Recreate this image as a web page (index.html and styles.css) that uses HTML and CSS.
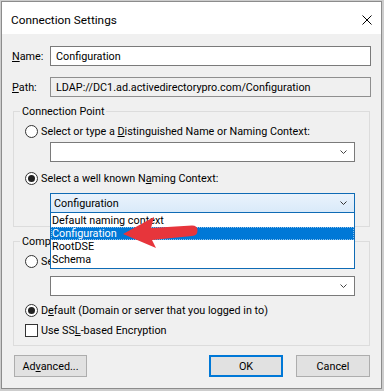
FILE: index.html
```html
<!DOCTYPE html>
<html lang="en">
<head>
  <meta charset="UTF-8">
  <title>Connection Settings</title>
  <link rel="stylesheet" href="styles.css">
</head>
<body>
  <div class="window">
    <div class="titlebar">
      <span class="title">Connection Settings</span>
      <svg class="close" width="10" height="10" viewBox="0 0 10 10">
        <path d="M0.5 0.5 L9.5 9.5 M9.5 0.5 L0.5 9.5" stroke="#000" stroke-width="1" fill="none"/>
      </svg>
    </div>

    <div class="content">
      <div class="field-row">
        <span class="field-label"><u>N</u>ame:</span>
        <div class="textbox">Configuration</div>
      </div>
      <div class="field-row">
        <span class="field-label"><u>P</u>ath:</span>
        <div class="textbox readonly">LDAP://DC1.ad.activedirectorypro.com/Configuration</div>
      </div>

      <div class="group">
        <div class="legend">Connection Point</div>
        <div class="option first">
          <span class="radio"></span>
          <span>Select or type a <u>D</u>istinguished Name or Naming Context:</span>
        </div>
        <div class="combo">
          <svg class="chevron" width="7" height="4" viewBox="0 0 7 4"><path d="M0.5 0.5 L3.5 3.5 L6.5 0.5" stroke="#444" fill="none"/></svg>
        </div>
        <div class="option gap-lg">
          <span class="radio checked"></span>
          <span>Select a well known N<u>a</u>ming Context:</span>
        </div>
        <div class="combo-wrap">
          <div class="combo open">
            <span>Configuration</span>
            <svg class="chevron" width="7" height="4" viewBox="0 0 7 4"><path d="M0.5 0.5 L3.5 3.5 L6.5 0.5" stroke="#333" fill="none"/></svg>
          </div>
          <ul class="dropdown">
            <li>Default naming context</li>
            <li class="selected">Configuration</li>
            <li>RootDSE</li>
            <li>Schema</li>
          </ul>
        </div>
      </div>

      <div class="group second">
        <div class="legend">Computer</div>
        <div class="option first">
          <span class="radio"></span>
          <span>Select or type a domain or server:</span>
        </div>
        <div class="combo low">
          <svg class="chevron" width="7" height="4" viewBox="0 0 7 4"><path d="M0.5 0.5 L3.5 3.5 L6.5 0.5" stroke="#444" fill="none"/></svg>
        </div>
        <div class="option gap-md">
          <span class="radio checked"></span>
          <span>D<u>e</u>fault (Domain or server that you logged in to)</span>
        </div>
        <div class="option">
          <span class="checkbox"></span>
          <span>Use SS<u>L</u>-based Encryption</span>
        </div>
      </div>

      <div class="buttons">
        <button class="btn">Ad<u>v</u>anced...</button>
        <button class="btn default">OK</button>
        <button class="btn">Cancel</button>
      </div>
    </div>

    <svg class="pointer" width="80" height="36" viewBox="120 214 80 36">
      <path d="M123 234 L154 217 L151 228 L192 225.5 Q197.5 225.5 197.5 230.5 Q197.5 235.5 192 236 L152 240 L156 248 Z" fill="#e7353b"/>
    </svg>
  </div>
</body>
</html>
```
FILE: styles.css
```css
* {
  box-sizing: border-box;
}

body {
  margin: 0;
  background: #cdcdcd;
  font-family: Roboto, sans-serif;
  font-size: 10.8px;
  color: #000;
}

u {
  text-underline-offset: 1px;
}

.window {
  position: relative;
  margin: 1px 0 0 1px;
  width: 381px;
  height: 388px;
  border: 1px solid #8c8c8c;
  background: #f0f0f0;
}

.titlebar {
  display: flex;
  align-items: center;
  height: 32px;
  padding: 3px 9px 0 9px;
  background: #fff;
}

.title {
  font-size: 11.8px;
}

.close {
  margin-left: auto;
}

.content {
  padding: 12px 10px 0 10px;
}

.field-row {
  display: flex;
  align-items: center;
  height: 20px;
}

.field-row + .field-row {
  margin-top: 11px;
}

.field-label {
  width: 38px;
}

.textbox {
  flex: 1;
  display: flex;
  align-items: center;
  height: 20px;
  padding-left: 5px;
  border: 1px solid #7a7a7a;
  background: #fff;
}

.textbox.readonly {
  background: #f0f0f0;
  border-color: #8f8f8f;
}

/* group boxes */
.group {
  margin: 14px 1px 0 1px;
  padding: 0 14px 13px 11px;
  border: 1px solid #dcdcdc;
}

.group.second {
  padding-bottom: 7px;
}

.legend {
  width: fit-content;
  margin: -8px 0 0 -5px;
  padding: 0 2px;
  line-height: 15px;
  background: #f0f0f0;
}

.option {
  display: flex;
  align-items: center;
  gap: 3px;
  height: 15px;
  margin-top: 5px;
}

.option.gap-lg {
  margin-top: 9px;
}

.option.gap-md {
  margin-top: 7px;
}

.radio {
  position: relative;
  width: 13px;
  height: 13px;
  border: 1px solid #333;
  border-radius: 50%;
  background: #fff;
}

.radio.checked::after {
  content: "";
  position: absolute;
  top: 2px;
  left: 2px;
  width: 7px;
  height: 7px;
  border-radius: 50%;
  background: #222;
}

.checkbox {
  width: 13px;
  height: 13px;
  border: 1px solid #333;
  background: #fff;
}

/* combo boxes */
.combo {
  display: flex;
  align-items: center;
  height: 20px;
  margin: 3px 0 0 25px;
  padding: 0 7px 0 3px;
  border: 1px solid #7a7a7a;
  background: #fff;
}

.combo.low {
  margin-top: 7px;
}

.chevron {
  margin-left: auto;
}

.combo-wrap {
  position: relative;
  margin: 7px 0 0 25px;
}

.combo.open {
  margin: 0;
  border-color: #0f6bb5;
  background: linear-gradient(#eaf3fc, #d9eaf9);
}

.dropdown {
  position: absolute;
  top: 100%;
  left: 0;
  right: 0;
  z-index: 2;
  margin: 0;
  padding: 1px 0 2px 0;
  list-style: none;
  border: 1px solid #0f6bb5;
  border-top: none;
  background: #fff;
}

.dropdown li {
  height: 13px;
  padding-left: 1px;
  line-height: 13px;
}

.dropdown li.selected {
  background: #0078d7;
  color: #fff;
  outline: 1px dotted #8cc0ea;
  outline-offset: -1px;
}

/* buttons */
.buttons {
  display: flex;
  margin: 9px 1px 0 2px;
}

.btn {
  width: 74px;
  height: 22px;
  padding: 0;
  border: 1px solid #adadad;
  background: #e1e1e1;
  font: inherit;
  color: #000;
}

.btn:first-child {
  width: 73px;
  margin-right: auto;
}

.btn.default {
  margin-right: 13px;
  border-color: #0078d7;
  box-shadow: inset 0 0 0 1px #0078d7;
}

.pointer {
  position: absolute;
  left: 118px;
  top: 212px;
  z-index: 3;
}
```
